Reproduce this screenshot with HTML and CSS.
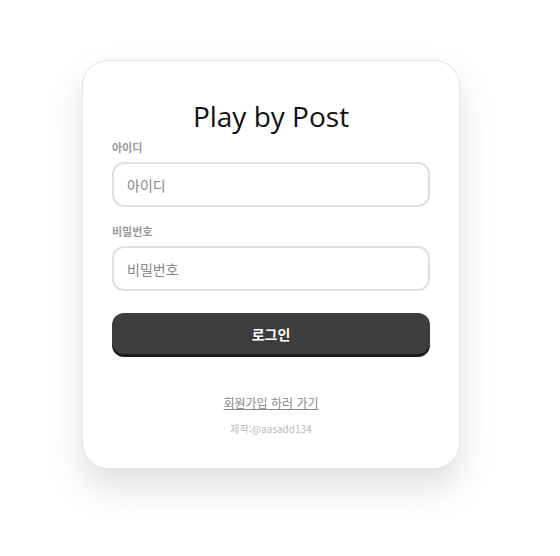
FILE: index.html
```html
<!DOCTYPE html>
<html lang="ko">
<head>
<meta charset="utf-8">
<link rel="stylesheet" href="styles.css">
</head>
<body>
<div class="page">
  <div class="card">
    <h1 class="title">Play by Post</h1>
    <label class="label">아이디</label>
    <input class="field" type="text" placeholder="아이디">
    <label class="label">비밀번호</label>
    <input class="field" type="password" placeholder="비밀번호">
    <button class="btn">로그인</button>
    <a class="link" href="#">회원가입 하러 가기</a>
    <div class="credit">제작:@aasadd134</div>
  </div>
</div>
</body>
</html>
```
FILE: styles.css
```css
html, body { margin: 0; padding: 0; background: #fff; }
body { font-family: "Noto Sans", "Noto Sans CJK KR", sans-serif; }
.page { padding: 60px 0 80px 82px; }
.card {
  width: 318px;
  box-sizing: content-box;
  padding: 35px 29px 32px;
  background: #fff;
  border: 1px solid #e4e4e4;
  border-radius: 26px;
  box-shadow: 0 18px 36px rgba(0,0,0,0.13);
  display: flex;
  flex-direction: column;
}
.title {
  margin: 0 0 5px;
  text-align: center;
  font-family: "Open Sans", sans-serif;
  font-weight: 400;
  font-size: 28px;
  line-height: 40px;
  color: #111;
}
.label {
  font-size: 11px;
  font-weight: 700;
  color: #999;
  margin: 0 0 7px;
  line-height: 14px;
}
.field {
  height: 45px;
  box-sizing: border-box;
  border: 2px solid #e0e0e0;
  border-radius: 12px;
  padding: 0 13px;
  font-family: "Noto Sans CJK KR", sans-serif;
  font-size: 14px;
  color: #333;
  margin: 0 0 18px;
  outline: none;
}
.field::placeholder { color: #888; }
.btn {
  margin-top: 4px;
  height: 41px;
  border: 0;
  border-radius: 12px;
  background: #3d3d3d;
  box-shadow: 0 3px 0 #1c1c1c;
  color: #fff;
  font-family: "Noto Sans CJK KR", sans-serif;
  font-weight: 700;
  font-size: 14px;
}
.link {
  margin-top: 40px;
  align-self: center;
  font-family: "Noto Sans CJK KR", sans-serif;
  font-size: 12px;
  color: #888;
  text-decoration: underline;
}
.credit {
  margin-top: 10px;
  text-align: center;
  font-family: "Noto Sans CJK KR", sans-serif;
  font-size: 10px;
  color: #bbb;
}
```
